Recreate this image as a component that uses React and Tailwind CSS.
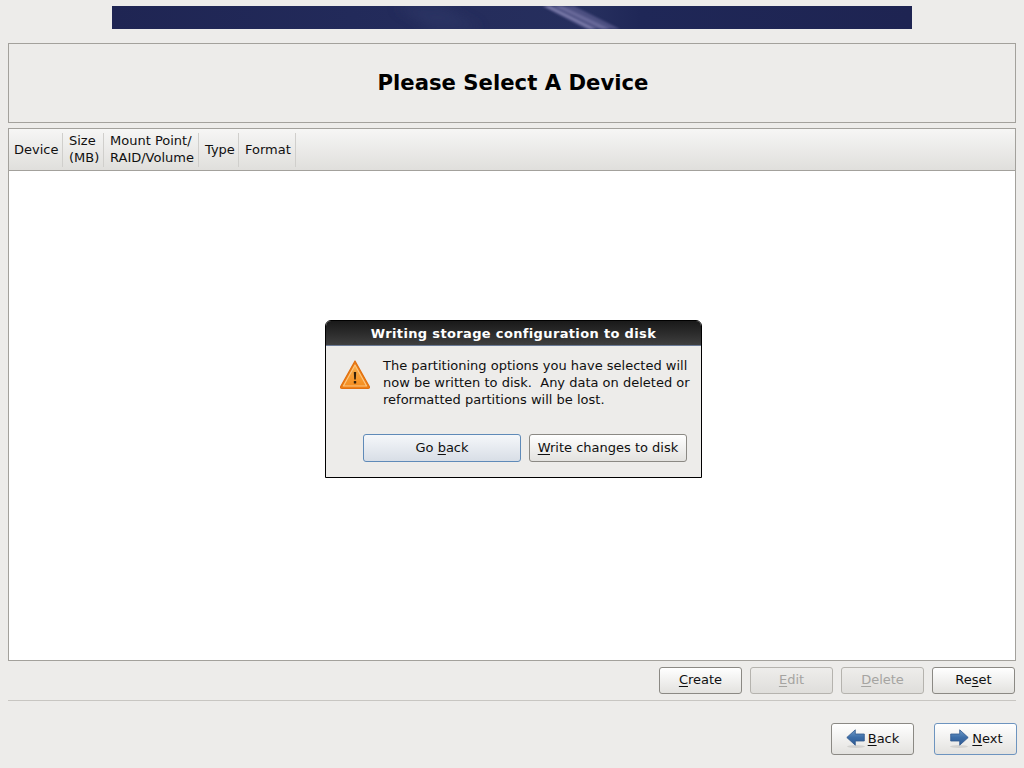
const font = { fontFamily: '"DejaVu Sans", sans-serif' };

function Under({ children }) {
  return <span className="underline underline-offset-[2px] decoration-1">{children}</span>;
}

function Banner() {
  return (
    <div className="w-[800px] h-[23px] mx-auto shrink-0">
      <svg width="800" height="23" viewBox="0 0 800 23" className="block">
        <defs>
          <linearGradient id="bannerBg" x1="0" x2="1" y1="0" y2="0">
            <stop offset="0" stopColor="#1f2553" />
            <stop offset="0.3" stopColor="#222a5a" />
            <stop offset="0.45" stopColor="#252d5c" />
            <stop offset="0.6" stopColor="#262f5e" />
            <stop offset="0.66" stopColor="#1f2757" />
            <stop offset="1" stopColor="#1e2452" />
          </linearGradient>
          <filter id="soft" x="-20%" y="-20%" width="140%" height="140%">
            <feGaussianBlur stdDeviation="1" />
          </filter>
          <filter id="softWide" x="-20%" y="-20%" width="140%" height="140%">
            <feGaussianBlur stdDeviation="6" />
          </filter>
        </defs>
        <rect width="800" height="23" fill="url(#bannerBg)" />
        <polygon points="283,0 330,0 370,23 320,23" fill="#2f3767" opacity="0.6" filter="url(#softWide)" />
        <polygon points="430,0 462,0 508,23 474,23" fill="#5a5b8e" opacity="0.75" filter="url(#soft)" />
        <polygon points="432,0 438,0 484,23 478,23" fill="#9a98c4" opacity="0.6" filter="url(#soft)" />
        <polygon points="442,0 450,0 498,23 490,23" fill="#8583b2" opacity="0.5" filter="url(#soft)" />
      </svg>
    </div>
  );
}

function ColHead({ className, children }) {
  return (
    <div className={`flex items-center border-r border-[#d0cfcc] h-[34px] pb-[1px] ${className}`}>
      <div className="leading-[17px] text-[#101010]">{children}</div>
    </div>
  );
}

function Btn({ disabled, children }) {
  return (
    <button
      className={`h-[27px] w-[83px] pb-[1px] rounded-[3px] border flex items-center justify-center bg-gradient-to-b ${
        disabled
          ? 'border-[#b5b3ae] from-[#eeedeb] to-[#dfdedb] text-[#a5a4a1]'
          : 'border-[#8b8984] from-[#ffffff] to-[#e3e2df] text-[#101010]'
      }`}
    >
      <span>{children}</span>
    </button>
  );
}

function NavArrow({ flip }) {
  return (
    <svg width="19" height="19" viewBox="0 0 19 19" className={flip ? '-scale-x-100' : ''}>
      <defs>
        <linearGradient id="arrowFill" x1="0" x2="0" y1="0" y2="1">
          <stop offset="0" stopColor="#6f9ccb" />
          <stop offset="0.5" stopColor="#3d6ea8" />
          <stop offset="1" stopColor="#2f5b95" />
        </linearGradient>
      </defs>
      <ellipse cx="9" cy="17.5" rx="9" ry="1.5" fill="#000" opacity="0.1" />
      <path d="M.7 5h9V.8l8.5 7.7-8.5 7.7V12h-9z" fill="url(#arrowFill)" stroke="#31588d" strokeWidth="0.8" />
    </svg>
  );
}

function WarningIcon() {
  return (
    <svg width="32" height="32" viewBox="0 0 32 32" className="shrink-0">
      <defs>
        <linearGradient id="warnFill" x1="0" x2="0" y1="0" y2="1">
          <stop offset="0" stopColor="#f9b04c" />
          <stop offset="1" stopColor="#f58d1f" />
        </linearGradient>
      </defs>
      <path d="M16 2 L30.3 27.5 Q31 29.5 29 29.5 H3 Q1 29.5 1.7 27.5 Z" fill="#ee7f14" stroke="#e06f10" strokeWidth="1.2" strokeLinejoin="round" />
      <path d="M16 6 L27.6 27 H4.4 Z" fill="url(#warnFill)" stroke="#fcc681" strokeWidth="1.2" strokeLinejoin="round" />
      <path d="M14.8 13h2.4l-.4 7.5h-1.6z" fill="#33200a" />
      <rect x="14.8" y="22" width="2.4" height="2.6" rx="0.5" fill="#33200a" />
    </svg>
  );
}

function WriteDialog() {
  return (
    <div className="absolute left-[325px] top-[320px] w-[377px] h-[158px] border border-black rounded-t-[6px] bg-[#edecea] flex flex-col overflow-hidden">
      <div className="h-[25px] shrink-0 bg-gradient-to-b from-[#191919] to-[#3f3f3f] text-white font-bold text-center leading-[25px] tracking-[0.35px] border-b border-[#6a7a96]">
        Writing storage configuration to disk
      </div>
      <div className="flex pl-[13px] pt-[12px] gap-[12px]">
        <div className="pt-[1px]">
          <WarningIcon />
        </div>
        <div className="leading-[17px] -mt-[1px] text-[#101010] whitespace-pre">
          {'The partitioning options you have selected will\nnow be written to disk.  Any data on deleted or\nreformatted partitions will be lost.'}
        </div>
      </div>
      <div className="flex justify-end gap-[8px] pr-[14px] mt-[26px]">
        <button className="w-[158px] h-[28px] pb-[1px] rounded-[3px] border border-[#5f8ab8] bg-gradient-to-b from-[#f5f7fa] to-[#d8dee6] text-[#101010]">
          Go <Under>b</Under>ack
        </button>
        <button className="w-[158px] h-[28px] pb-[1px] rounded-[3px] border border-[#8b8984] bg-gradient-to-b from-[#ffffff] to-[#e3e2df] text-[#101010]">
          <Under>W</Under>rite changes to disk
        </button>
      </div>
    </div>
  );
}

export default function App() {
  return (
    <div className="relative w-[1024px] h-[768px] bg-[#edecea] flex flex-col pt-[6px] overflow-hidden text-[13px]" style={font}>
      <Banner />

      <div className="mx-2 mt-[14px] h-[80px] shrink-0 border border-[#a3a19c] flex items-center justify-center">
        <h1 className="font-bold text-[21.2px] text-black pl-[2px]">Please Select A Device</h1>
      </div>

      <div className="mx-2 mt-[5px] h-[533px] shrink-0 border border-[#a3a19c] bg-white flex flex-col">
        <div className="h-[42px] shrink-0 flex items-center border-b border-[#a3a19c] bg-gradient-to-b from-[#f6f6f5] to-[#e0dfdc]">
          <ColHead className="w-[54px] pl-[5px]">Device</ColHead>
          <ColHead className="w-[41px] pl-[6px]">Size<br />(MB)</ColHead>
          <ColHead className="w-[95px] pl-[6px]">Mount Point/<br />RAID/Volume</ColHead>
          <ColHead className="w-[40px] pl-[6px]">Type</ColHead>
          <ColHead className="w-[57px] pl-[6px]">Format</ColHead>
        </div>
      </div>

      <div className="mx-2 mt-[6px] flex justify-end gap-[8px] pr-[1px]">
        <Btn><Under>C</Under>reate</Btn>
        <Btn disabled><Under>E</Under>dit</Btn>
        <Btn disabled><Under>D</Under>elete</Btn>
        <Btn>Re<Under>s</Under>et</Btn>
      </div>

      <div className="mx-2 mt-[6px] border-t border-[#c8c6c2]" />

      <div className="flex justify-end gap-[20px] pr-[7px] mt-[22px]">
        <button className="w-[83px] h-[32px] pb-[1px] rounded-[3px] border border-[#8b8984] bg-gradient-to-b from-[#ffffff] to-[#e3e2df] text-[#101010] flex items-center justify-center gap-[3px]">
          <NavArrow flip />
          <span><Under>B</Under>ack</span>
        </button>
        <button className="w-[83px] h-[32px] pb-[1px] rounded-[3px] border border-[#6d94bf] bg-gradient-to-b from-[#ffffff] to-[#e3e2df] text-[#101010] flex items-center justify-center gap-[3px] pl-[2px]">
          <NavArrow />
          <span><Under>N</Under>ext</span>
        </button>
      </div>

      <WriteDialog />
    </div>
  );
}
